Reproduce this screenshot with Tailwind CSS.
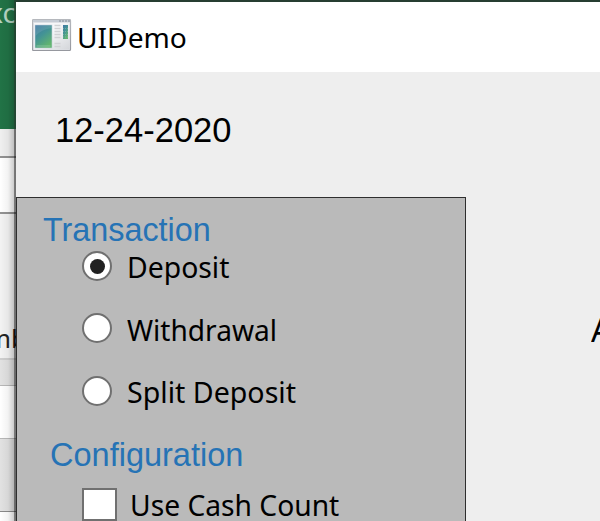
<!DOCTYPE html>
<html lang="en">
<head>
<meta charset="utf-8">
<title>UIDemo</title>
<script src="https://cdn.jsdelivr.net/npm/@tailwindcss/browser@4"></script>
</head>
<body class="w-[600px] h-[521px] overflow-hidden bg-[#263e31] flex font-['Noto_Sans',sans-serif] text-black">
  <!-- Window behind -->
  <aside class="relative w-4 h-[521px] shrink-0 overflow-hidden flex flex-col bg-[#f3f3f3]">
    <div class="h-[129px] shrink-0 bg-[#217346] flex justify-end"><span class="-mt-[2px] text-[28px] leading-[28px] text-[#b5d5c3] whitespace-nowrap">xc</span></div>
    <div class="h-[27px] shrink-0 bg-[#f0f0f0]"></div>
    <div class="h-[58px] shrink-0 bg-white border-y-2 border-[#929292]"></div>
    <div class="h-[144px] shrink-0 bg-[#f3f3f3] flex items-end justify-end pb-[5px]"><span class="text-[26px] leading-[30px] text-[#222] whitespace-nowrap -mr-[11px]">mb</span></div>
    <div class="h-[28px] shrink-0 bg-[#e2e2e2] border-t-2 border-b border-t-[#cfcfcf] border-b-[#b8b8b8]"></div>
    <div class="h-[53px] shrink-0 bg-white border-b border-[#b8b8b8]"></div>
    <div class="h-[73px] shrink-0 bg-[#e2e2e2] border-b border-[#8a8a8a]"></div>
    <div class="grow bg-white"></div>
    <div class="absolute inset-0 bg-linear-to-r from-black/0 via-black/5 to-black/25"></div>
    <div class="absolute top-0 right-0 w-[2px] h-[129px] bg-[#263e31]/70"></div>
    <div class="absolute top-[129px] right-0 w-[2px] h-[392px] bg-black/40"></div>
  </aside>

  <!-- Application window -->
  <main class="w-[584px] h-[519px] mt-[2px] shrink-0 flex flex-col bg-[#eeeeee] overflow-hidden">
    <header class="h-[70px] shrink-0 bg-white flex pl-4 pt-[17px]">
      <svg class="w-10 h-[33px] shrink-0" viewBox="0 0 40 33">
        <defs>
          <linearGradient id="g" x1="0" y1="0" x2=".6" y2="1"><stop offset="0" stop-color="#4076a5"/><stop offset=".5" stop-color="#439395"/><stop offset="1" stop-color="#62b56e"/></linearGradient>
          <linearGradient id="f" x1="0" y1="0" x2="0" y2="1"><stop offset="0" stop-color="#b5b8bd"/><stop offset="1" stop-color="#96989f"/></linearGradient>
          <linearGradient id="p" x1="0" y1="0" x2="1" y2="1"><stop offset=".4" stop-color="#f6f7f9"/><stop offset="1" stop-color="#d4d6da"/></linearGradient>
        </defs>
        <rect x=".5" y=".5" width="38" height="31" rx="1" fill="#dfe1e6" stroke="url(#f)" stroke-width="1.200"/>
        <path d="M1 2h37" stroke="#c5ccd5" stroke-width="2"/>
        <path d="M27 2h11" stroke="#9aa1ac" stroke-width="1.5" stroke-dasharray="2 1"/>
        <rect x="2" y="4" width="35.500" height="26.500" fill="url(#p)"/>
        <rect x="3" y="6" width="17" height="23" fill="url(#g)" stroke="#c3d1d9" stroke-width=".6"/>
        <path d="M3.500 17Q10 10 19.500 9V6.500H3.500Z" fill="#fff" opacity=".1"/>
        <path d="M4.500 27h14" stroke="#97cbb0" stroke-width=".7"/>
        <path d="M22.500 6.500h6M22.500 9.500h6M22.500 12.500h6M22.500 15.500h6M22.500 18.500h6M22.500 24.500h6M22.500 27.500h6" stroke="#cfd1d4" stroke-width="1.300"/>
        <rect x="31" y="6" width="5" height="14" fill="url(#g)"/>
        <path d="M31 9.500h5M31 12.500h5M31 15.500h5M31 18h5" stroke="#8dbcae" stroke-width=".6" stroke-dasharray="1 1"/>
      </svg>
      <h1 class="ml-[5px] -mt-[1px] text-[28px] leading-[38px] whitespace-nowrap origin-left scale-x-[1.005]">UIDemo</h1>
    </header>

    <div class="h-[125px] shrink-0 pl-[39px] pt-[38px] font-['Liberation_Sans',sans-serif] text-[34.500px] leading-[40px] whitespace-nowrap">12-24-2020</div>

    <div class="flex grow">
      <section class="w-[450px] h-[324px] shrink-0 bg-[#bababa] border border-b-0 border-[#2e2e2e] flex flex-col">
        <h2 class="h-[53px] shrink-0 pl-[26px] pt-[12px] font-['Liberation_Sans',sans-serif] text-[33px] leading-[40px] text-[#2673b5] whitespace-nowrap origin-[26px] scale-x-[0.98]">Transaction</h2>
        <div class="flex flex-col pl-[65px] text-[28.500px] leading-[30px]">
          <label class="h-[62px] flex">
            <span class="size-[30px] shrink-0 rounded-full border-2 border-[#707070] bg-white flex items-center justify-center"><span class="size-[15px] rounded-full bg-[#212121]"></span></span>
            <span class="ml-[15px] mt-[1px] whitespace-nowrap origin-left scale-x-[0.995]">Deposit</span>
          </label>
          <label class="h-[63px] flex">
            <span class="size-[30px] shrink-0 rounded-full border-2 border-[#707070] bg-white"></span>
            <span class="ml-[15px] mt-[2px] whitespace-nowrap origin-left scale-x-[0.985]">Withdrawal</span>
          </label>
          <label class="h-[55px] flex">
            <span class="size-[30px] shrink-0 rounded-full border-2 border-[#707070] bg-white"></span>
            <span class="ml-[15px] mt-[1px] whitespace-nowrap scale-x-[1.003] origin-left">Split Deposit</span>
          </label>
        </div>
        <h2 class="h-[57px] shrink-0 pl-[33px] pt-[4px] font-['Liberation_Sans',sans-serif] text-[33px] leading-[40px] text-[#2673b5] whitespace-nowrap origin-[33px] scale-x-[0.985]">Configuration</h2>
        <label class="flex pl-[65px] text-[28.500px] leading-[30px]">
          <span class="w-[35px] h-[33px] shrink-0 border-2 border-[#707070] bg-white"></span>
          <span class="ml-[13px] mt-[2px] whitespace-nowrap origin-left scale-x-[0.99]">Use Cash Count</span>
        </label>
      </section>
      <div class="ml-[125px] mt-[113px] w-[9px] h-10 overflow-hidden text-[33px] leading-[40px]">A</div>
    </div>
  </main>
</body>
</html>
